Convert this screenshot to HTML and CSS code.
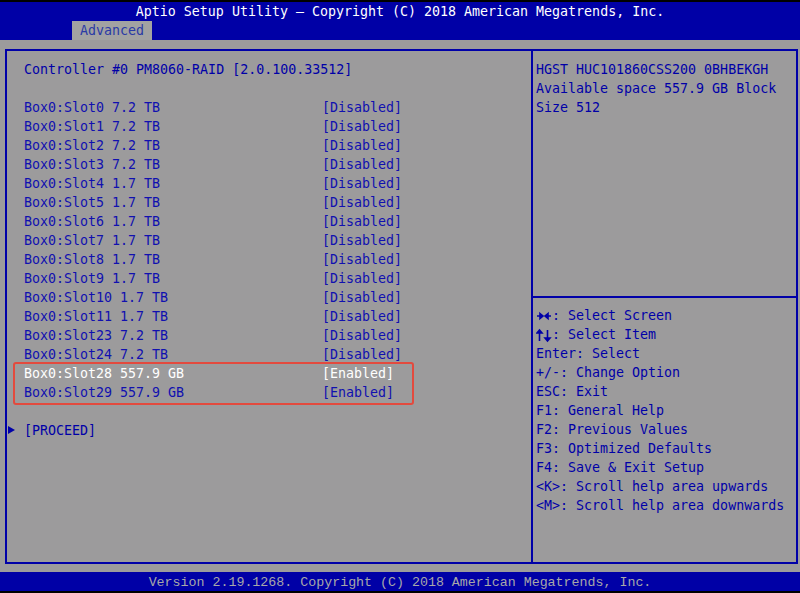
FILE: index.html
```html
<!DOCTYPE html>
<html lang="en">
<head>
    <meta charset="UTF-8">
    <title>Aptio Setup Utility</title>
    <link rel="stylesheet" href="styles.css">
</head>
<body>
    <div class="header">
        <div class="title">Aptio Setup Utility – Copyright (C) 2018 American Megatrends, Inc.</div>
        <div class="tabs">
            <span class="tab">Advanced</span>
        </div>
    </div>

    <div class="main">
        <div class="panel">
            <div class="left">
                <div class="row"><span class="name">Controller #0 PM8060-RAID [2.0.100.33512]</span></div>
                <div class="row blank"></div>
                <div class="row item"><span class="name">Box0:Slot0 7.2 TB</span><span class="value">[Disabled]</span></div>
                <div class="row item"><span class="name">Box0:Slot1 7.2 TB</span><span class="value">[Disabled]</span></div>
                <div class="row item"><span class="name">Box0:Slot2 7.2 TB</span><span class="value">[Disabled]</span></div>
                <div class="row item"><span class="name">Box0:Slot3 7.2 TB</span><span class="value">[Disabled]</span></div>
                <div class="row item"><span class="name">Box0:Slot4 1.7 TB</span><span class="value">[Disabled]</span></div>
                <div class="row item"><span class="name">Box0:Slot5 1.7 TB</span><span class="value">[Disabled]</span></div>
                <div class="row item"><span class="name">Box0:Slot6 1.7 TB</span><span class="value">[Disabled]</span></div>
                <div class="row item"><span class="name">Box0:Slot7 1.7 TB</span><span class="value">[Disabled]</span></div>
                <div class="row item"><span class="name">Box0:Slot8 1.7 TB</span><span class="value">[Disabled]</span></div>
                <div class="row item"><span class="name">Box0:Slot9 1.7 TB</span><span class="value">[Disabled]</span></div>
                <div class="row item"><span class="name">Box0:Slot10 1.7 TB</span><span class="value">[Disabled]</span></div>
                <div class="row item"><span class="name">Box0:Slot11 1.7 TB</span><span class="value">[Disabled]</span></div>
                <div class="row item"><span class="name">Box0:Slot23 7.2 TB</span><span class="value">[Disabled]</span></div>
                <div class="row item"><span class="name">Box0:Slot24 7.2 TB</span><span class="value">[Disabled]</span></div>
                <div class="marked">
                    <div class="row item active"><span class="name">Box0:Slot28 557.9 GB</span><span class="value">[Enabled]</span></div>
                    <div class="row item"><span class="name">Box0:Slot29 557.9 GB</span><span class="value">[Enabled]</span></div>
                </div>
                <div class="row blank"></div>
                <div class="row link"><span class="name">[PROCEED]</span></div>
            </div>

            <div class="right">
                <div class="info">HGST HUC101860CSS200 0BHBEKGH Available space 557.9 GB Block Size 512</div>
                <div class="keys">
                    <div class="key"><svg class="arrows" width="16" height="19" viewBox="0 0 16 19"><path d="M1 10h4M4 7.5l3 2.5-3 2.5zM15 10h-4M12 7.5l-3 2.5 3 2.5z" fill="#0000a8" stroke="#0000a8" stroke-width="1.6"/></svg>: Select Screen</div>
                    <div class="key"><svg class="arrows" width="16" height="19" viewBox="0 0 16 19"><path d="M3.5 16V8M1 8l2.5-3 2.5 3zM11.5 5v8M9 13l2.5 3 2.5-3z" fill="#0000a8" stroke="#0000a8" stroke-width="1.6"/></svg>: Select Item</div>
                    <div class="key">Enter: Select</div>
                    <div class="key">+/-: Change Option</div>
                    <div class="key">ESC: Exit</div>
                    <div class="key">F1: General Help</div>
                    <div class="key">F2: Previous Values</div>
                    <div class="key">F3: Optimized Defaults</div>
                    <div class="key">F4: Save &amp; Exit Setup</div>
                    <div class="key">&lt;K&gt;: Scroll help area upwards</div>
                    <div class="key">&lt;M&gt;: Scroll help area downwards</div>
                </div>
            </div>
        </div>
    </div>

    <div class="footer">Version 2.19.1268. Copyright (C) 2018 American Megatrends, Inc.</div>
</body>
</html>
```

FILE: styles.css
```css
* {
    margin: 0;
    padding: 0;
    box-sizing: border-box;
}

body {
    width: 800px;
    height: 593px;
    background-color: #000;
    font-family: "DejaVu Sans Mono", monospace;
    font-size: 13.3px;
    line-height: 19px;
    color: #0000a8;
    overflow: hidden;
}

.header {
    margin-top: 2px;
    height: 38px;
    background-color: #0000a6;
}

.title {
    height: 19px;
    line-height: 19px;
    text-align: center;
    color: #fff;
}

.tabs {
    padding-left: 72px;
}

.tab {
    display: inline-block;
    height: 19px;
    line-height: 20px;
    padding: 0 8px;
    background-color: #a2a2a2;
    color: #2a3aa6;
}

.main {
    height: 532px;
    background-color: #9c9b9c;
    padding: 9px 2px 8px 5px;
}

.panel {
    display: flex;
    height: 515px;
    border: 2px solid #0000a8;
}

/* left column: setup items */
.left {
    width: 526px;
    flex-shrink: 0;
    border-right: 2px solid #0000a8;
    padding-top: 9px;
}

.row {
    display: flex;
    height: 19px;
    padding-left: 17px;
    white-space: pre;
}

.row .name {
    width: 298px;
}

.row.item {
    color: #1010b0;
}

.row.active {
    color: #fff;
}

.marked {
    position: relative;
}

.marked::after {
    content: "";
    position: absolute;
    top: -2px;
    left: 6px;
    width: 397px;
    bottom: -3px;
    border: 2px solid #e34a3e;
    border-radius: 3px;
}

.row.link::before {
    content: "";
    display: inline-block;
    width: 0;
    height: 0;
    margin: 5px 9px 0 -16px;
    border-left: 7px solid #0000a8;
    border-top: 4px solid transparent;
    border-bottom: 4px solid transparent;
}

/* right column: help */
.right {
    flex: 1;
    display: flex;
    flex-direction: column;
}

.info {
    flex-shrink: 0;
    height: 247px;
    padding: 9px 4px 0 3px;
    border-bottom: 2px solid #0000a8;
}

.keys {
    padding: 8px 0 0 3px;
}

.key {
    white-space: pre;
}

.arrows {
    vertical-align: top;
}

.footer {
    height: 19px;
    padding-top: 2px;
    line-height: 17px;
    background-color: #0000a6;
    text-align: center;
    color: #a8a8a8;
    font-family: "Liberation Mono", monospace;
}
```
